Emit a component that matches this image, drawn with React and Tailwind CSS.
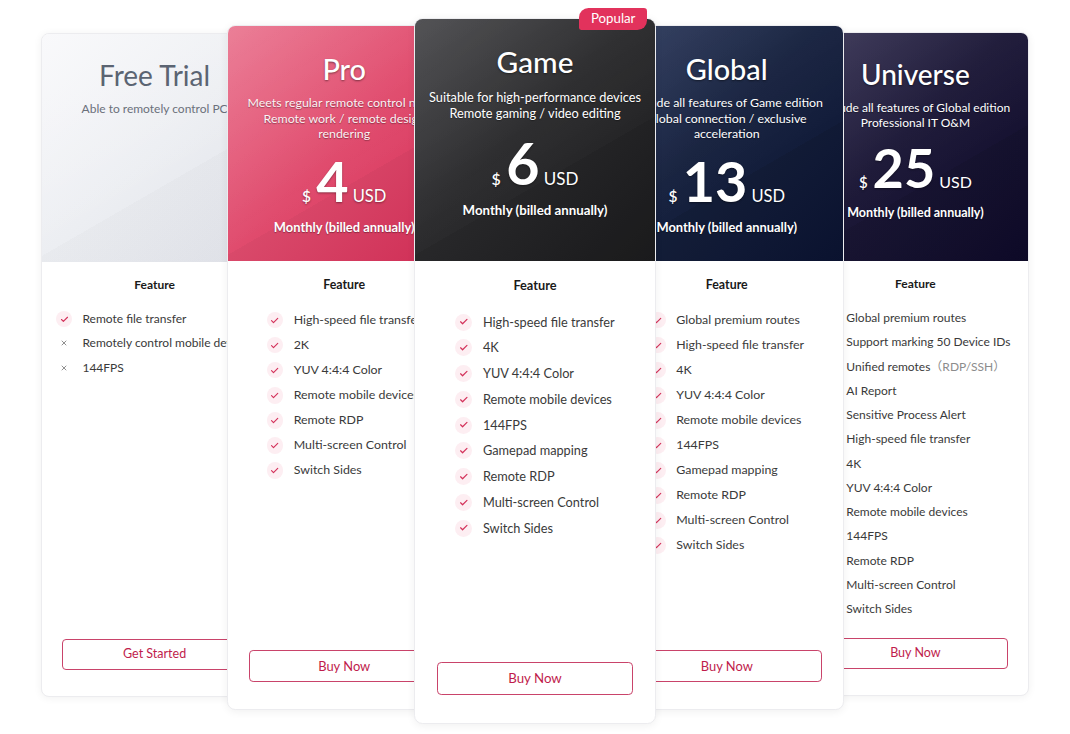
import { Check, X } from 'lucide-react'

// Tarjetas de precios superpuestas; el tamaño de cada una sale de zoom sobre una base de 227x664
const PLANS = [
  {
    id: 'free',
    title: 'Free Trial',
    desc: ['Able to remotely control PC'],
    features: [
      { text: 'Remote file transfer', ok: true },
      { text: 'Remotely control mobile devices', ok: false },
      { text: '144FPS', ok: false },
    ],
    cta: 'Get Started',
    wrap: 'mt-[33px] z-10',
    zoom: '[zoom:1]',
    header: 'bg-[linear-gradient(150deg,rgba(255,255,255,0.35)_0%,rgba(255,255,255,0)_62%,rgba(0,0,0,0.015)_62%),linear-gradient(135deg,#f6f6f9_0%,#eceef2_50%,#e1e3ea_100%)]',
    titleCls: 'text-[#5b6472]',
    descCls: 'text-[#6b707b]',
  },
  {
    id: 'pro',
    title: 'Pro',
    desc: ['Meets regular remote control needs', 'Remote work / remote design', 'rendering'],
    price: '4',
    features: [
      { text: 'High-speed file transfer', ok: true },
      { text: '2K', ok: true },
      { text: 'YUV 4:4:4 Color', ok: true },
      { text: 'Remote mobile devices', ok: true },
      { text: 'Remote RDP', ok: true },
      { text: 'Multi-screen Control', ok: true },
      { text: 'Switch Sides', ok: true },
    ],
    cta: 'Buy Now',
    wrap: 'mt-[25px] -ml-[41px] z-20',
    zoom: '[zoom:1.032]',
    header: 'bg-[linear-gradient(150deg,rgba(255,255,255,0.06)_0%,rgba(255,255,255,0)_62%,rgba(0,0,0,0.03)_62%),linear-gradient(135deg,#ea7791_0%,#e04b6d_50%,#d62f58_100%)]',
    titleCls: 'text-white',
    descCls: 'text-white/95',
  },
  {
    id: 'game',
    title: 'Game',
    desc: ['Suitable for high-performance devices', 'Remote gaming / video editing'],
    price: '6',
    popular: true,
    features: [
      { text: 'High-speed file transfer', ok: true },
      { text: '4K', ok: true },
      { text: 'YUV 4:4:4 Color', ok: true },
      { text: 'Remote mobile devices', ok: true },
      { text: '144FPS', ok: true },
      { text: 'Gamepad mapping', ok: true },
      { text: 'Remote RDP', ok: true },
      { text: 'Multi-screen Control', ok: true },
      { text: 'Switch Sides', ok: true },
    ],
    cta: 'Buy Now',
    wrap: 'mt-[18px] -ml-[47px] z-30',
    zoom: '[zoom:1.063]',
    header: 'bg-[linear-gradient(150deg,rgba(255,255,255,0.05)_0%,rgba(255,255,255,0)_62%,rgba(0,0,0,0.08)_62%),linear-gradient(135deg,#4a4a4d_0%,#2c2c2e_45%,#1c1c1e_100%)]',
    titleCls: 'text-white',
    descCls: 'text-white',
  },
  {
    id: 'global',
    title: 'Global',
    desc: ['Include all features of Game edition', 'Global connection / exclusive', 'acceleration'],
    price: '13',
    features: [
      { text: 'Global premium routes', ok: true },
      { text: 'High-speed file transfer', ok: true },
      { text: '4K', ok: true },
      { text: 'YUV 4:4:4 Color', ok: true },
      { text: 'Remote mobile devices', ok: true },
      { text: '144FPS', ok: true },
      { text: 'Gamepad mapping', ok: true },
      { text: 'Remote RDP', ok: true },
      { text: 'Multi-screen Control', ok: true },
      { text: 'Switch Sides', ok: true },
    ],
    cta: 'Buy Now',
    wrap: 'mt-[25px] -ml-[46px] z-20',
    zoom: '[zoom:1.032]',
    header: 'bg-[linear-gradient(150deg,rgba(255,255,255,0.05)_0%,rgba(255,255,255,0)_62%,rgba(0,0,0,0.08)_62%),linear-gradient(135deg,#2f3c5f_0%,#17223f_45%,#0b1433_100%)]',
    titleCls: 'text-white',
    descCls: 'text-white',
  },
  {
    id: 'universe',
    title: 'Universe',
    desc: ['Include all features of Global edition', 'Professional IT O&M'],
    price: '25',
    features: [
      { text: 'Global premium routes', ok: true },
      { text: 'Support marking 50 Device IDs', ok: true },
      { text: 'Unified remotes', note: '（RDP/SSH）', ok: true },
      { text: 'AI Report', ok: true },
      { text: 'Sensitive Process Alert', ok: true },
      { text: 'High-speed file transfer', ok: true },
      { text: '4K', ok: true },
      { text: 'YUV 4:4:4 Color', ok: true },
      { text: 'Remote mobile devices', ok: true },
      { text: '144FPS', ok: true },
      { text: 'Remote RDP', ok: true },
      { text: 'Multi-screen Control', ok: true },
      { text: 'Switch Sides', ok: true },
    ],
    cta: 'Buy Now',
    wrap: 'mt-[32px] -ml-[42px] z-10',
    zoom: '[zoom:1]',
    header: 'bg-[linear-gradient(150deg,rgba(255,255,255,0.05)_0%,rgba(255,255,255,0)_62%,rgba(0,0,0,0.08)_62%),linear-gradient(135deg,#3b3758_0%,#1d1938_45%,#0e0a2a_100%)]',
    titleCls: 'text-white',
    descCls: 'text-white',
  },
]

export default function App() {
  return (
    <div className="min-h-[734px] w-full bg-white font-['Lato','Noto_Sans_CJK_SC',sans-serif]">
      <div className="flex justify-center items-start">
        {PLANS.map(plan => (
          <div key={plan.id} className={`relative shrink-0 ${plan.wrap}`}>
            <PlanCard plan={plan} />
          </div>
        ))}
      </div>
    </div>
  )
}

function PlanCard({ plan }) {
  const dark = plan.id !== 'free'
  return (
    <div className={`relative w-[227px] h-[664px] flex flex-col rounded-[8px] bg-white border border-[#ececef] shadow-[0_1px_8px_rgba(0,0,0,0.06)] ${plan.zoom}`}>
      {plan.popular && (
        <div className="absolute -top-[10px] right-[7px] h-[20px] w-[64px] flex items-center justify-center rounded-tl-[9px] rounded-br-[9px] rounded-tr-[3px] rounded-bl-[2px] bg-[#e2325c] text-white text-[12.5px] leading-none">
          Popular
        </div>
      )}

      {/* Cabecera */}
      <div className={`h-[228px] shrink-0 rounded-t-[7px] px-[8px] pt-[23px] text-center ${plan.header}`}>
        <h2
          className={`text-[28px] leading-[36px] ${plan.titleCls} ${
            dark ? 'font-medium [text-shadow:0_1px_2px_rgba(0,0,0,0.45)]' : 'font-normal'
          }`}
        >
          {plan.title}
        </h2>
        <div className={`mt-[8px] text-[12px] leading-[15px] ${plan.descCls} ${dark ? '[text-shadow:0_1px_1px_rgba(0,0,0,0.35)]' : ''}`}>
          {plan.desc.map(line => (
            <p key={line} className="whitespace-nowrap">{line}</p>
          ))}
        </div>
        {plan.price && (
          <>
            <div className="mt-[11px] flex items-baseline justify-center text-white [text-shadow:0_1px_2px_rgba(0,0,0,0.4)]">
              <span className="text-[15px] font-semibold mr-[5px]">$</span>
              <span className="text-[54px] font-bold leading-[54px]">{plan.price}</span>
              <span className="text-[16px] ml-[4px]">USD</span>
            </div>
            <p className="mt-[10px] text-[12.5px] leading-[16px] font-bold text-white [text-shadow:0_1px_1px_rgba(0,0,0,0.35)]">
              Monthly (billed annually)
            </p>
          </>
        )}
      </div>

      {/* Cuerpo */}
      <div className="flex-1 flex flex-col items-center pt-[15px]">
        <p className="text-[12px] leading-[16px] font-bold text-[#1a1a1a]">Feature</p>
        <ul className="mt-[14px] self-center">
          {plan.features.map(f => (
            <li key={f.text} className="h-[24.25px] flex items-center whitespace-nowrap text-[12px] text-[#3a3a3a]">
              <span className={`w-[16px] h-[16px] mr-[10px] shrink-0 rounded-full flex items-center justify-center ${f.ok ? 'bg-[#fdeef2]' : ''}`}>
                {f.ok ? (
                  <Check size={9} strokeWidth={3} className="text-[#d3315a]" />
                ) : (
                  <X size={8} strokeWidth={2.5} className="text-[#7a7a7a]" />
                )}
              </span>
              {f.text}
              {f.note && <span className="text-[#8c8c8c]">{f.note}</span>}
            </li>
          ))}
        </ul>
        <button className="mt-auto mb-[26px] w-[185px] h-[31px] rounded-[4px] border border-[#c9436a] text-[12.5px] text-[#c01c4c] bg-white">
          {plan.cta}
        </button>
      </div>
    </div>
  )
}
